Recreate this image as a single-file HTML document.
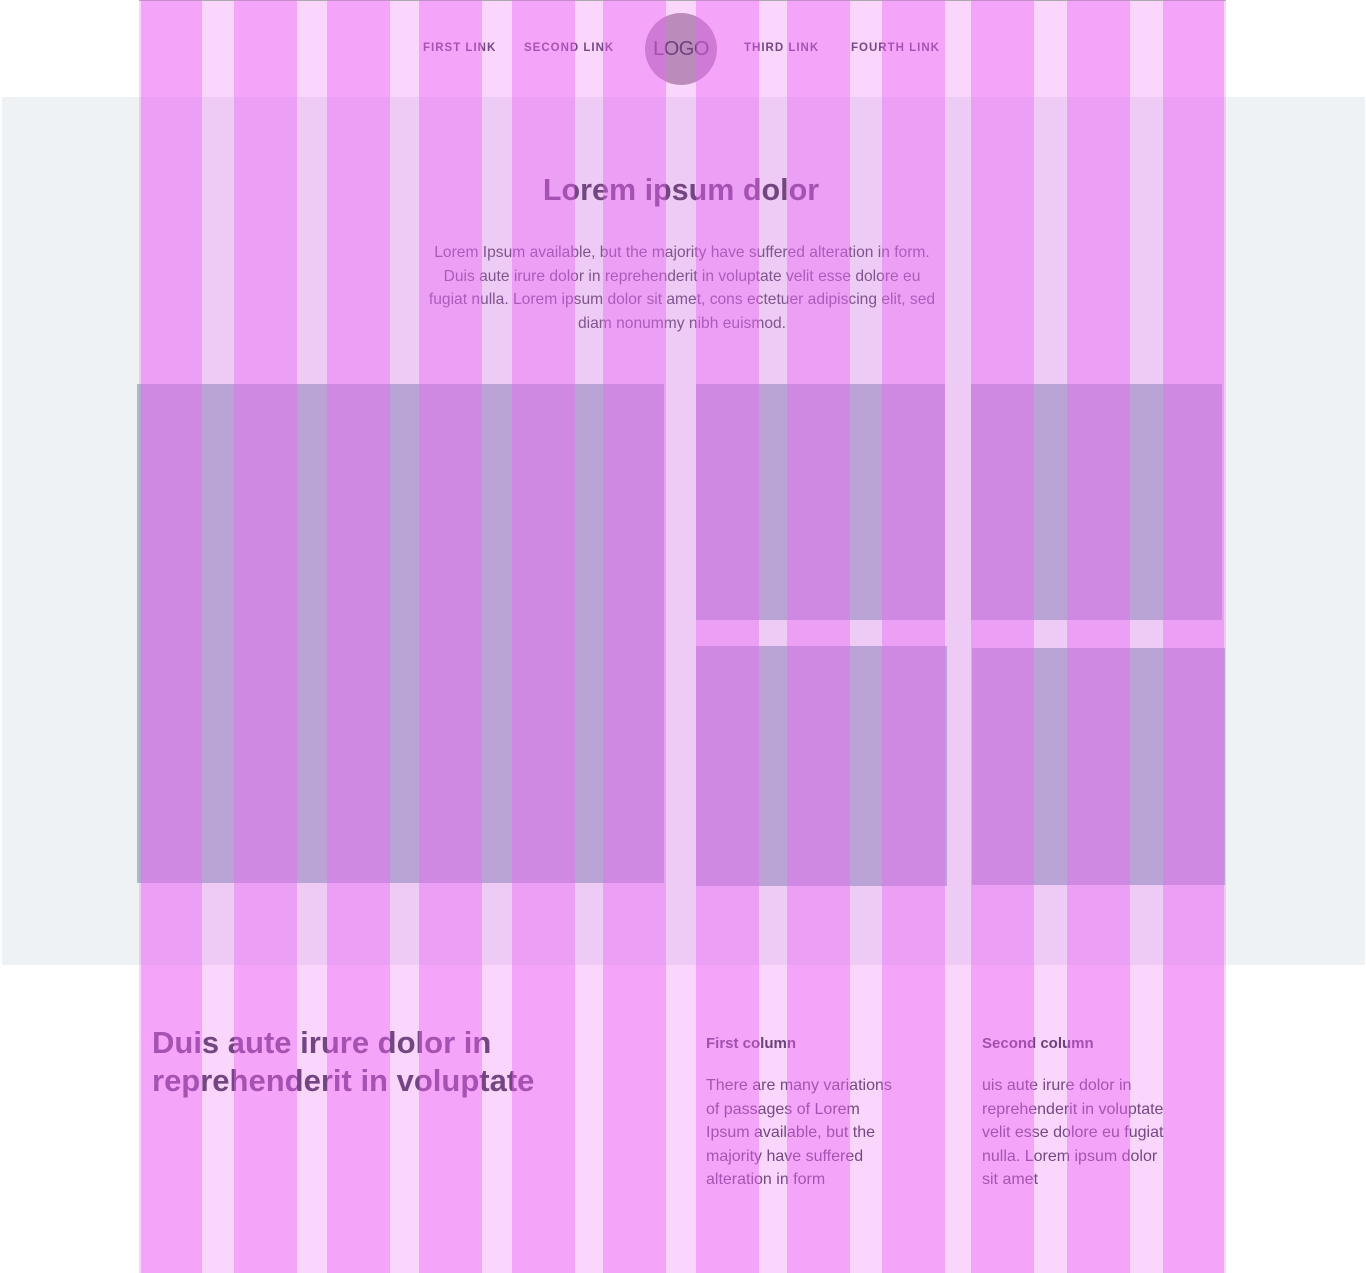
<!DOCTYPE html>
<html><head><meta charset="utf-8"><style>
*{margin:0;padding:0;box-sizing:border-box}
body{width:1366px;height:1273px;position:relative;background:#fff;font-family:"Liberation Sans",sans-serif;overflow:hidden;color:#3e3550}
.abs{position:absolute}
.band{left:2px;top:97px;width:1363px;height:868px;background:#eef2f5}
.nav{top:42px;font-size:11.5px;font-weight:bold;letter-spacing:1px;color:#4a3d5e}
.logo{left:645px;top:13px;width:72px;height:72px;border-radius:50%;background:#a99aa8;text-align:center;line-height:72px;font-size:20px;color:#3e3550;letter-spacing:-0.5px}
.img{background:#a8bccb}
.ov{left:139px;top:0;width:1087px;height:1273px;background:rgba(236,100,245,0.27);border-top:1px solid #aaa}
.col{top:0;height:1273px;background:rgba(236,100,245,0.42)}
p{font-size:16px;line-height:23.5px}
</style></head><body>
<div class="abs band"></div>
<div class="abs nav" style="left:423px">FIRST LINK</div>
<div class="abs nav" style="left:524px">SECOND LINK</div>
<div class="abs logo">LOGO</div>
<div class="abs nav" style="left:744px">THIRD LINK</div>
<div class="abs nav" style="left:851px">FOURTH LINK</div>
<div class="abs" style="left:0;width:1362px;top:173px;text-align:center;font-size:30.5px;font-weight:bold;color:#463c58">Lorem ipsum dolor</div>
<p class="abs" style="left:380px;width:604px;top:241px;text-align:center;color:#55506a;font-size:15.6px;white-space:nowrap">Lorem Ipsum available, but the majority have suffered alteration in form.<br>Duis aute irure dolor in reprehenderit in voluptate velit esse dolore eu<br>fugiat nulla. Lorem ipsum dolor sit amet, cons ectetuer adipiscing elit, sed<br>diam nonummy nibh euismod.</p>
<div class="abs img" style="left:137px;top:384px;width:527px;height:499px"></div>
<div class="abs img" style="left:696px;top:384px;width:249px;height:236px"></div>
<div class="abs img" style="left:971px;top:384px;width:251px;height:236px"></div>
<div class="abs img" style="left:696px;top:646px;width:251px;height:240px"></div>
<div class="abs img" style="left:972px;top:648px;width:253px;height:237px"></div>
<div class="abs" style="left:152px;top:1024px;font-size:31px;line-height:38px;font-weight:bold;color:#463c58">Duis aute irure dolor in<br>reprehenderit in voluptate</div>
<div class="abs" style="left:706px;top:1035px;font-size:15px;font-weight:bold">First column</div>
<div class="abs" style="left:982px;top:1035px;font-size:15px;font-weight:bold">Second column</div>
<p class="abs" style="left:706px;top:1074px;width:195px;color:#45405a">There are many variations of passages of Lorem Ipsum available, but the majority have suffered alteration in form</p>
<p class="abs" style="left:982px;top:1074px;width:188px;color:#45405a">uis aute irure dolor in reprehenderit in voluptate velit esse dolore eu fugiat nulla. Lorem ipsum dolor sit amet</p>
<div class="abs ov"></div>
<div class="abs col" style="left:141px;width:61px"></div>
<div class="abs col" style="left:234px;width:63px"></div>
<div class="abs col" style="left:327px;width:63px"></div>
<div class="abs col" style="left:419px;width:63px"></div>
<div class="abs col" style="left:512px;width:63px"></div>
<div class="abs col" style="left:603px;width:63px"></div>
<div class="abs col" style="left:696px;width:63px"></div>
<div class="abs col" style="left:787px;width:63px"></div>
<div class="abs col" style="left:882px;width:63px"></div>
<div class="abs col" style="left:971px;width:63px"></div>
<div class="abs col" style="left:1067px;width:63px"></div>
<div class="abs col" style="left:1163px;width:61px"></div>
</body></html>
